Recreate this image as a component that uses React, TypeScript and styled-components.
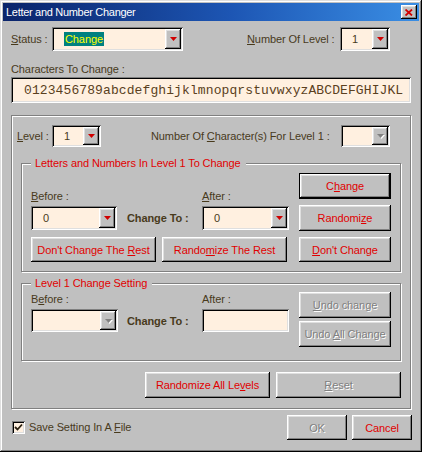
import React from 'react';
import styled, { createGlobalStyle, css } from 'styled-components';

const LABEL = '#483a1c';
const RED = '#e00000';
const FIELD_BG = '#fff0e0';
const FACE = '#c0c0c0';

const GlobalStyle = createGlobalStyle`
  html, body {
    margin: 0;
    padding: 0;
    background: ${FACE};
  }
  body {
    font-family: "Liberation Sans", Arial, sans-serif;
    font-size: 11px;
  }
  u {
    text-underline-offset: 1px;
  }
`;

const raised = css`
  box-shadow: inset -1px -1px 0 #000, inset 1px 1px 0 #fff,
    inset -2px -2px 0 #808080, inset 2px 2px 0 #dfdfdf;
`;

const sunken = css`
  box-shadow: inset 1px 1px 0 #808080, inset -1px -1px 0 #fff,
    inset 2px 2px 0 #000, inset -2px -2px 0 #dfdfdf;
`;

const Window = styled.div`
  width: 422px;
  height: 452px;
  box-sizing: border-box;
  padding: 3px;
  background: ${FACE};
  box-shadow: inset -1px -1px 0 #000, inset 1px 1px 0 #dfdfdf,
    inset -2px -2px 0 #808080, inset 2px 2px 0 #fff;
  display: flex;
  flex-direction: column;
  letter-spacing: -0.1px;
  color: ${LABEL};
`;

const TitleBar = styled.div`
  height: 18px;
  flex: none;
  background: linear-gradient(90deg, #0a246a 0%, #1d56b4 55%, #3a8ee4 100%);
  display: flex;
  align-items: center;
  justify-content: space-between;
  padding: 0 2px 0 3px;
`;

const TitleText = styled.span`
  color: #fff;
  font-size: 11px;
  letter-spacing: -0.3px;
`;

const CloseButton = styled.div`
  width: 16px;
  height: 14px;
  box-sizing: border-box;
  background: ${FACE};
  ${raised};
  display: flex;
  align-items: center;
  justify-content: center;
`;

const Row = styled.div<{ $top?: number; $left?: number }>`
  display: flex;
  align-items: center;
  flex: none;
  margin-top: ${(p) => p.$top ?? 0}px;
  padding-left: ${(p) => p.$left ?? 0}px;
`;

const Label = styled.span<{ $w?: number; $ml?: number }>`
  color: ${LABEL};
  white-space: nowrap;
  line-height: 13px;
  flex: none;
  width: ${(p) => (p.$w ? `${p.$w}px` : 'auto')};
  margin-left: ${(p) => p.$ml ?? 0}px;
`;

const ComboBox = styled.div<{ $w: number; $h: number; $ml?: number }>`
  width: ${(p) => p.$w}px;
  height: ${(p) => p.$h}px;
  margin-left: ${(p) => p.$ml ?? 0}px;
  box-sizing: border-box;
  flex: none;
  background: ${FIELD_BG};
  ${sunken};
  padding: 2px;
  display: flex;
`;

const ComboText = styled.div`
  flex: 1;
  display: flex;
  align-items: center;
  padding-left: 10px;
  color: ${LABEL};
`;

const Selected = styled.span`
  background: #008080;
  color: #ffff00;
  padding: 0 1px;
  line-height: 14px;
`;

const DropButton = styled.div`
  width: 16px;
  box-sizing: border-box;
  background: ${FACE};
  ${raised};
  display: flex;
  align-items: center;
  justify-content: center;
`;

const TextField = styled.div<{ $w: number; $h: number }>`
  width: ${(p) => p.$w}px;
  height: ${(p) => p.$h}px;
  box-sizing: border-box;
  background: ${FIELD_BG};
  ${sunken};
`;

const CharsField = styled.div`
  margin: 1px 0 0 8px;
  width: 400px;
  height: 26px;
  box-sizing: border-box;
  background: ${FIELD_BG};
  ${sunken};
  display: flex;
  align-items: center;
  padding-left: 13px;
  font-family: "Liberation Mono", "Courier New", monospace;
  font-size: 13px;
  letter-spacing: 0.1px;
  color: #5a4020;
  white-space: nowrap;
  overflow: hidden;
`;

const SectionLabel = styled.div`
  margin: 12px 0 0 8px;
  line-height: 13px;
  color: ${LABEL};
`;

const Group = styled.div<{ $top: number; $pad: string; $ml?: number }>`
  position: relative;
  margin-top: ${(p) => p.$top}px;
  margin-left: ${(p) => p.$ml ?? 0}px;
  border: 1px solid #808080;
  box-shadow: 1px 1px 0 #fff, inset 1px 1px 0 #fff;
  padding: ${(p) => p.$pad};
  display: flex;
  flex-direction: column;
  flex: none;
`;

const OuterGroup = styled(Group)`
  width: 400px;
  box-sizing: border-box;
  margin-left: 8px;
`;

const Legend = styled.span`
  position: absolute;
  top: -7px;
  left: 9px;
  padding: 0 5px 0 4px;
  background: ${FACE};
  color: ${RED};
  line-height: 13px;
  white-space: nowrap;
`;

const TopSection = styled.div`
  display: flex;
  justify-content: space-between;
  align-items: flex-end;
`;

const FieldArea = styled.div<{ $rowH: number; $gap?: number; $pt?: number; $pb?: number }>`
  display: grid;
  grid-template-columns: 86px 85px 87px;
  grid-template-rows: 13px ${(p) => p.$rowH}px;
  row-gap: ${(p) => p.$gap ?? 3}px;
  align-self: ${(p) => (p.$pt ? 'flex-start' : 'flex-end')};
  padding-top: ${(p) => p.$pt ?? 0}px;
  padding-bottom: ${(p) => p.$pb ?? 0}px;
`;

const ChangeTo = styled.span`
  font-weight: bold;
  color: ${LABEL};
  align-self: center;
  padding-left: 10px;
  white-space: nowrap;
`;

const ButtonColumn = styled.div<{ $gap: number }>`
  display: flex;
  flex-direction: column;
  gap: ${(p) => p.$gap}px;
`;

const ButtonRow = styled.div<{ $top: number; $gap: number; $end?: boolean }>`
  display: flex;
  gap: ${(p) => p.$gap}px;
  margin-top: ${(p) => p.$top}px;
  justify-content: ${(p) => (p.$end ? 'flex-end' : 'space-between')};
`;

const ButtonPair = styled.div`
  display: flex;
  gap: 6px;
`;

const Button = styled.div<{ $w: number; $h?: number; $default?: boolean; $disabled?: boolean }>`
  width: ${(p) => p.$w}px;
  height: ${(p) => p.$h ?? 26}px;
  box-sizing: border-box;
  flex: none;
  background: ${FACE};
  border: ${(p) => (p.$default ? '1px solid #000' : 'none')};
  ${raised};
  display: flex;
  align-items: center;
  justify-content: center;
  white-space: nowrap;
  color: ${(p) => (p.$disabled ? '#808080' : RED)};
  text-shadow: ${(p) => (p.$disabled ? '1px 1px 0 #fff' : 'none')};
`;

const BottomBar = styled.div`
  display: flex;
  align-items: center;
  justify-content: space-between;
  margin-top: 6px;
  padding: 0 7px 0 9px;
`;

const CheckLine = styled.div`
  display: flex;
  align-items: center;
  gap: 4px;
`;

const CheckBox = styled.div`
  width: 13px;
  height: 13px;
  box-sizing: border-box;
  background: ${FIELD_BG};
  ${sunken};
  display: flex;
  align-items: center;
  justify-content: center;
`;

const DialogButtons = styled.div`
  display: flex;
  gap: 5px;
`;

const Arrow = ({ disabled }: { disabled?: boolean }) => (
  <svg width="7" height="4" viewBox="0 0 7 4" style={{ display: 'block', overflow: 'visible' }}>
    {disabled && <polygon points="1,1 8,1 4.5,5" fill="#fff" />}
    <polygon points="0,0 7,0 3.5,4" fill={disabled ? '#808080' : '#d00000'} />
  </svg>
);

type ComboProps = {
  w: number;
  h: number;
  ml?: number;
  disabled?: boolean;
  children?: React.ReactNode;
};

const Combo = ({ w, h, ml, disabled, children }: ComboProps) => (
  <ComboBox $w={w} $h={h} $ml={ml}>
    <ComboText>{children}</ComboText>
    <DropButton>
      <Arrow disabled={disabled} />
    </DropButton>
  </ComboBox>
);

export default function App() {
  return (
    <>
      <GlobalStyle />
      <Window>
        <TitleBar>
          <TitleText>Letter and Number Changer</TitleText>
          <CloseButton>
            <svg width="8" height="7" viewBox="0 0 8 7">
              <path d="M0.5 0.5 L7 6.5 M7 0.5 L0.5 6.5" stroke="#d00000" strokeWidth="1.8" />
            </svg>
          </CloseButton>
        </TitleBar>

        <Row $top={6} $left={8}>
          <Label $w={41}>
            <u>S</u>tatus :
          </Label>
          <Combo w={131} h={24}>
            <Selected>Change</Selected>
          </Combo>
          <Label $w={93} $ml={64}>
            <u>N</u>umber Of Level :
          </Label>
          <Combo w={50} h={24}>
            1
          </Combo>
        </Row>

        <SectionLabel>Characters To Change :</SectionLabel>
        <CharsField>0123456789abcdefghijklmnopqrstuvwxyzABCDEFGHIJKL</CharsField>

        <OuterGroup $top={12} $pad="9px 9px 10px 5px">
          <Row>
            <Label $w={35}>
              <u>L</u>evel :
            </Label>
            <Combo w={49} h={22}>
              1
            </Combo>
            <Label $w={190} $ml={50}>
              Number Of <u>C</u>haracter(s) For Level 1 :
            </Label>
            <Combo w={49} h={22} disabled />
          </Row>

          <Group $top={16} $ml={4} $pad="9px 9px 9px 9px">
            <Legend>Letters and Numbers In Level 1 To Change</Legend>
            <TopSection>
              <FieldArea $rowH={24} $pb={1}>
                <Label>
                  <u>B</u>efore :
                </Label>
                <span />
                <Label>
                  <u>A</u>fter :
                </Label>
                <Combo w={86} h={24}>
                  0
                </Combo>
                <ChangeTo>Change To :</ChangeTo>
                <Combo w={87} h={24}>
                  0
                </Combo>
              </FieldArea>
              <ButtonColumn $gap={6}>
                <Button $w={92} $default>
                  <span>
                    C<u>h</u>ange
                  </span>
                </Button>
                <Button $w={92}>
                  <span>
                    Randomi<u>z</u>e
                  </span>
                </Button>
              </ButtonColumn>
            </TopSection>
            <ButtonRow $top={6} $gap={0}>
              <ButtonPair>
                <Button $w={125} $h={25}>
                  <span>
                    Don't Change The <u>R</u>est
                  </span>
                </Button>
                <Button $w={125} $h={25}>
                  <span>
                    Rando<u>m</u>ize The Rest
                  </span>
                </Button>
              </ButtonPair>
              <Button $w={92} $h={25}>
                <span>
                  <u>D</u>on't Chan<u>g</u>e
                </span>
              </Button>
            </ButtonRow>
          </Group>

          <Group $top={11} $ml={4} $pad="8px 9px 13px 9px">
            <Legend>Level 1 Change Setting</Legend>
            <TopSection>
              <FieldArea $rowH={23} $pt={1}>
                <Label>
                  B<u>e</u>fore :
                </Label>
                <span />
                <Label>After :</Label>
                <Combo w={87} h={23} disabled />
                <ChangeTo>Change To :</ChangeTo>
                <TextField $w={87} $h={23} />
              </FieldArea>
              <ButtonColumn $gap={3}>
                <Button $w={92} $disabled>
                  <span>
                    <u>U</u>ndo change
                  </span>
                </Button>
                <Button $w={92} $disabled>
                  <span>
                    Undo <u>A</u>ll Change
                  </span>
                </Button>
              </ButtonColumn>
            </TopSection>
          </Group>

          <ButtonRow $top={11} $gap={6} $end>
            <Button $w={125}>
              <span>
                Randomize All Le<u>v</u>els
              </span>
            </Button>
            <Button $w={125} $disabled>
              <span>
                <u>R</u>eset
              </span>
            </Button>
          </ButtonRow>
        </OuterGroup>

        <BottomBar>
          <CheckLine>
            <CheckBox>
              <svg width="9" height="9" viewBox="0 0 9 9">
                <path d="M1 4 L3.5 6.5 L8 1.5" stroke="#2a2010" strokeWidth="1.8" fill="none" />
              </svg>
            </CheckBox>
            <Label>
              Save Setting In A <u>F</u>ile
            </Label>
          </CheckLine>
          <DialogButtons>
            <Button $w={60} $h={25} $disabled>
              OK
            </Button>
            <Button $w={60} $h={25}>
              Cancel
            </Button>
          </DialogButtons>
        </BottomBar>
      </Window>
    </>
  );
}
